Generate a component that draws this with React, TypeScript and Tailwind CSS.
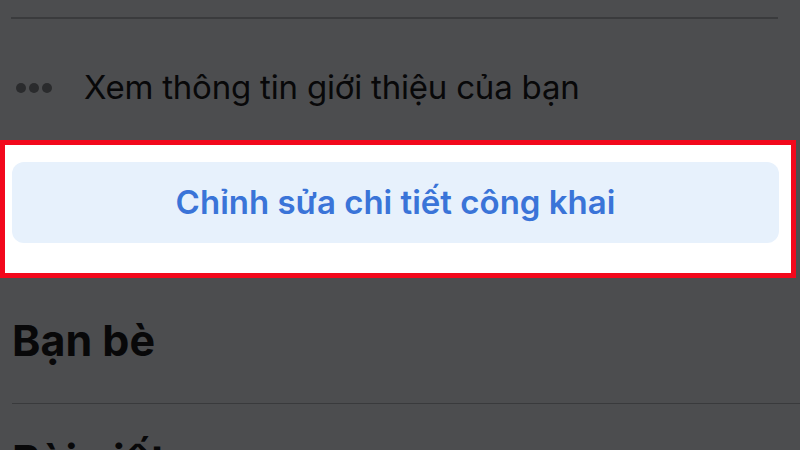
import React from 'react';

export default function App() {
  return (
    <div
      className="w-[800px] h-[450px] overflow-hidden bg-[#4c4d4f] flex flex-col"
      style={{ fontFamily: 'Inter, "Noto Sans", sans-serif' }}
    >
      {/* top divider */}
      <div className="shrink-0 mt-[17px] ml-[11px] mr-[22px] h-[2px] bg-[#3a3b3d]" />

      {/* about row */}
      <div className="shrink-0 h-[121px] flex items-center pt-[16px]">
        <div className="flex items-center gap-[3px] ml-[16px] w-[68px]">
          <span className="w-[10px] h-[10px] rounded-full bg-[#2a2b2d]" />
          <span className="w-[10px] h-[10px] rounded-full bg-[#2a2b2d]" />
          <span className="w-[10px] h-[10px] rounded-full bg-[#2a2b2d]" />
        </div>
        <span className="text-[33px] text-[#080809] tracking-[-0.2px]">
          Xem thông tin giới thiệu của bạn
        </span>
      </div>

      {/* highlighted action */}
      <div className="shrink-0 w-[796px] h-[138px] border-[5px] border-[#f2081c] bg-white pt-[17px] pl-[7px] pr-[12px]">
        <button className="w-full h-[81px] rounded-[12px] bg-[#e7f1fc] text-[#3a74d8] text-[33px] font-semibold flex items-center justify-center">
          Chỉnh sửa chi tiết công khai
        </button>
      </div>

      {/* friends */}
      <div className="shrink-0 h-[125px] flex items-center pl-[12px]">
        <span className="text-[43px] font-bold text-[#080809] leading-none">Bạn bè</span>
      </div>

      <div className="shrink-0 ml-[12px] h-[1px] bg-[#393a3c]" />

      <div className="shrink-0 pl-[12px] pt-[35px]">
        <span className="text-[43px] font-bold text-[#080809] leading-none">Bài viết</span>
      </div>
    </div>
  );
}
